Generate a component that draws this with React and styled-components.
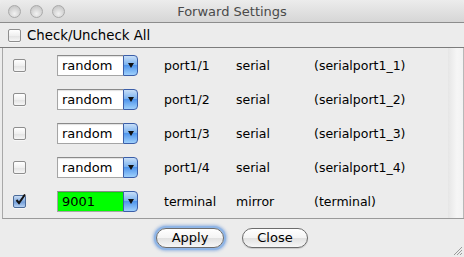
import React, { useState } from 'react';
import styled, { createGlobalStyle } from 'styled-components';

const GlobalStyle = createGlobalStyle`
  html, body {
    margin: 0;
    padding: 0;
    background: #ececec;
  }
  body {
    font-family: "DejaVu Sans", "Liberation Sans", sans-serif;
    font-size: 12.5px;
    color: #000;
  }
`;

const Window = styled.div`
  width: 464px;
  height: 257px;
  background: #ececec;
  display: flex;
  flex-direction: column;
  position: relative;
  overflow: hidden;
`;

const TitleBar = styled.div`
  height: 22px;
  flex: none;
  display: flex;
  align-items: center;
  position: relative;
  background: linear-gradient(#ececec, #d6d6d6);
  border-bottom: 1px solid #8c8c8c;
  border-radius: 5px 5px 0 0;
`;

const Lights = styled.div`
  display: flex;
  gap: 9px;
  padding-left: 8px;
`;

const Light = styled.span`
  width: 13px;
  height: 13px;
  border-radius: 50%;
  box-sizing: border-box;
  border: 1px solid #a9a9a9;
  background: radial-gradient(circle at 50% 70%, #f2f2f2 0%, #d4d4d4 55%, #bdbdbd 100%);
`;

const Title = styled.div`
  position: absolute;
  left: 0;
  right: 0;
  text-align: center;
  font-size: 13px;
  color: #4a4a4a;
  pointer-events: none;
`;

const CheckAllRow = styled.label`
  height: 24px;
  flex: none;
  display: flex;
  align-items: center;
  gap: 6px;
  padding-left: 8px;
  font-size: 13.3px;
  border-bottom: 1px solid #7c7c7c;
`;

const Box = styled.span`
  width: 13px;
  height: 13px;
  box-sizing: border-box;
  border-radius: 2px;
  display: inline-flex;
  align-items: center;
  justify-content: center;
  border: 1px solid ${(p) => (p.$checked ? '#4a6a98' : '#8e8e8e')};
  background: ${(p) =>
    p.$checked
      ? 'linear-gradient(#c9dcf4, #7fa8dd 50%, #6e9bd8 51%, #b6d1f2)'
      : 'linear-gradient(#ffffff, #f0f0f0 50%, #e2e2e2 51%, #f6f6f6)'};
  box-shadow: 0 1px 0 rgba(255, 255, 255, 0.6);
  position: relative;
  flex: none;
`;

const Panel = styled.div`
  height: 170px;
  flex: none;
  margin-left: 2px;
  display: flex;
  border-left: 1px solid #a8a8a8;
  border-bottom: 1px solid #9a9a9a;
`;

const Rows = styled.div`
  flex: 1;
  display: flex;
  flex-direction: column;
`;

const Track = styled.div`
  width: 15px;
  flex: none;
  background: linear-gradient(to right, #e6e6e6, #f6f6f6 60%, #f2f2f2);
  border-right: 1px solid #b8b8b8;
`;

const Row = styled.div`
  height: 34px;
  display: grid;
  grid-template-columns: 44px 107px 72px 78px auto;
  align-items: center;
  padding-left: 10px;
`;

const Combo = styled.div`
  width: 81px;
  height: 21px;
  display: flex;
  box-sizing: border-box;
`;

const Field = styled.div`
  flex: 1;
  box-sizing: border-box;
  border: 1px solid #a5a5a5;
  border-top-color: #8a8a8a;
  border-right: none;
  background: ${(p) => p.$bg};
  display: flex;
  align-items: center;
  padding-left: 4px;
  font-size: 13px;
  box-shadow: inset 0 1px 1px rgba(0, 0, 0, 0.12);
`;

const Arrow = styled.div`
  width: 15px;
  box-sizing: border-box;
  border: 1px solid #3b5ea8;
  border-radius: 0 4px 4px 0;
  background: linear-gradient(#c7def7, #7db3ef 45%, #4f95ec 50%, #9fd0fb);
  display: flex;
  align-items: center;
  justify-content: center;
  &::after {
    content: '';
    border-left: 3px solid transparent;
    border-right: 3px solid transparent;
    border-top: 5px solid #111;
  }
`;

const Cell = styled.span`
  white-space: nowrap;
`;

const Footer = styled.div`
  flex: 1;
  display: flex;
  justify-content: center;
  align-items: center;
  gap: 18px;
  padding-bottom: 1px;
`;

const Button = styled.button`
  font-family: inherit;
  font-size: 13px;
  width: ${(p) => p.$w}px;
  height: 20px;
  padding: 0;
  border-radius: 10px;
  border: 1px solid #6c6c6c;
  background: linear-gradient(#ffffff, #f4f4f4 50%, #e1e1e1 51%, #f7f7f7);
  color: #000;
  box-shadow: ${(p) =>
    p.$focus ? '0 0 0 2px #8fb5e6, 0 0 3px 3px rgba(90, 140, 215, 0.55)' : '0 1px 1px rgba(0,0,0,0.15)'};
  cursor: default;
`;

const Grip = styled.svg`
  position: absolute;
  right: 1px;
  bottom: 1px;
`;

const CheckMark = () => (
  <svg width="11" height="11" viewBox="0 0 11 11" style={{ position: 'absolute', left: 1, top: -2 }}>
    <path d="M1.5 6 L4 9 L10 0.5" fill="none" stroke="#111" strokeWidth="2" />
  </svg>
);

const Check = ({ checked }) => <Box $checked={checked}>{checked && <CheckMark />}</Box>;

const rows = [
  { on: false, value: 'random', port: 'port1/1', type: 'serial', name: '(serialport1_1)' },
  { on: false, value: 'random', port: 'port1/2', type: 'serial', name: '(serialport1_2)' },
  { on: false, value: 'random', port: 'port1/3', type: 'serial', name: '(serialport1_3)' },
  { on: false, value: 'random', port: 'port1/4', type: 'serial', name: '(serialport1_4)' },
  { on: true, value: '9001', port: 'terminal', type: 'mirror', name: '(terminal)', green: true },
];

export default function App() {
  const [all] = useState(false);

  return (
    <>
      <GlobalStyle />
      <Window>
        <TitleBar>
          <Lights>
            <Light />
            <Light />
            <Light />
          </Lights>
          <Title>Forward Settings</Title>
        </TitleBar>
        <CheckAllRow>
          <Check checked={all} />
          <span>Check/Uncheck All</span>
        </CheckAllRow>
        <Panel>
          <Rows>
            {rows.map((r) => (
              <Row key={r.port}>
                <Check checked={r.on} />
                <Combo>
                  <Field $bg={r.green ? '#00ff00' : '#ffffff'}>{r.value}</Field>
                  <Arrow />
                </Combo>
                <Cell>{r.port}</Cell>
                <Cell>{r.type}</Cell>
                <Cell>{r.name}</Cell>
              </Row>
            ))}
          </Rows>
          <Track />
        </Panel>
        <Footer>
          <Button $w={68} $focus>Apply</Button>
          <Button $w={66}>Close</Button>
        </Footer>
        <Grip width="12" height="12" viewBox="0 0 12 12">
          <path d="M11 3 L3 11 M11 6 L6 11 M11 9 L9 11" stroke="#9a9a9a" strokeWidth="1" />
        </Grip>
      </Window>
    </>
  );
}
